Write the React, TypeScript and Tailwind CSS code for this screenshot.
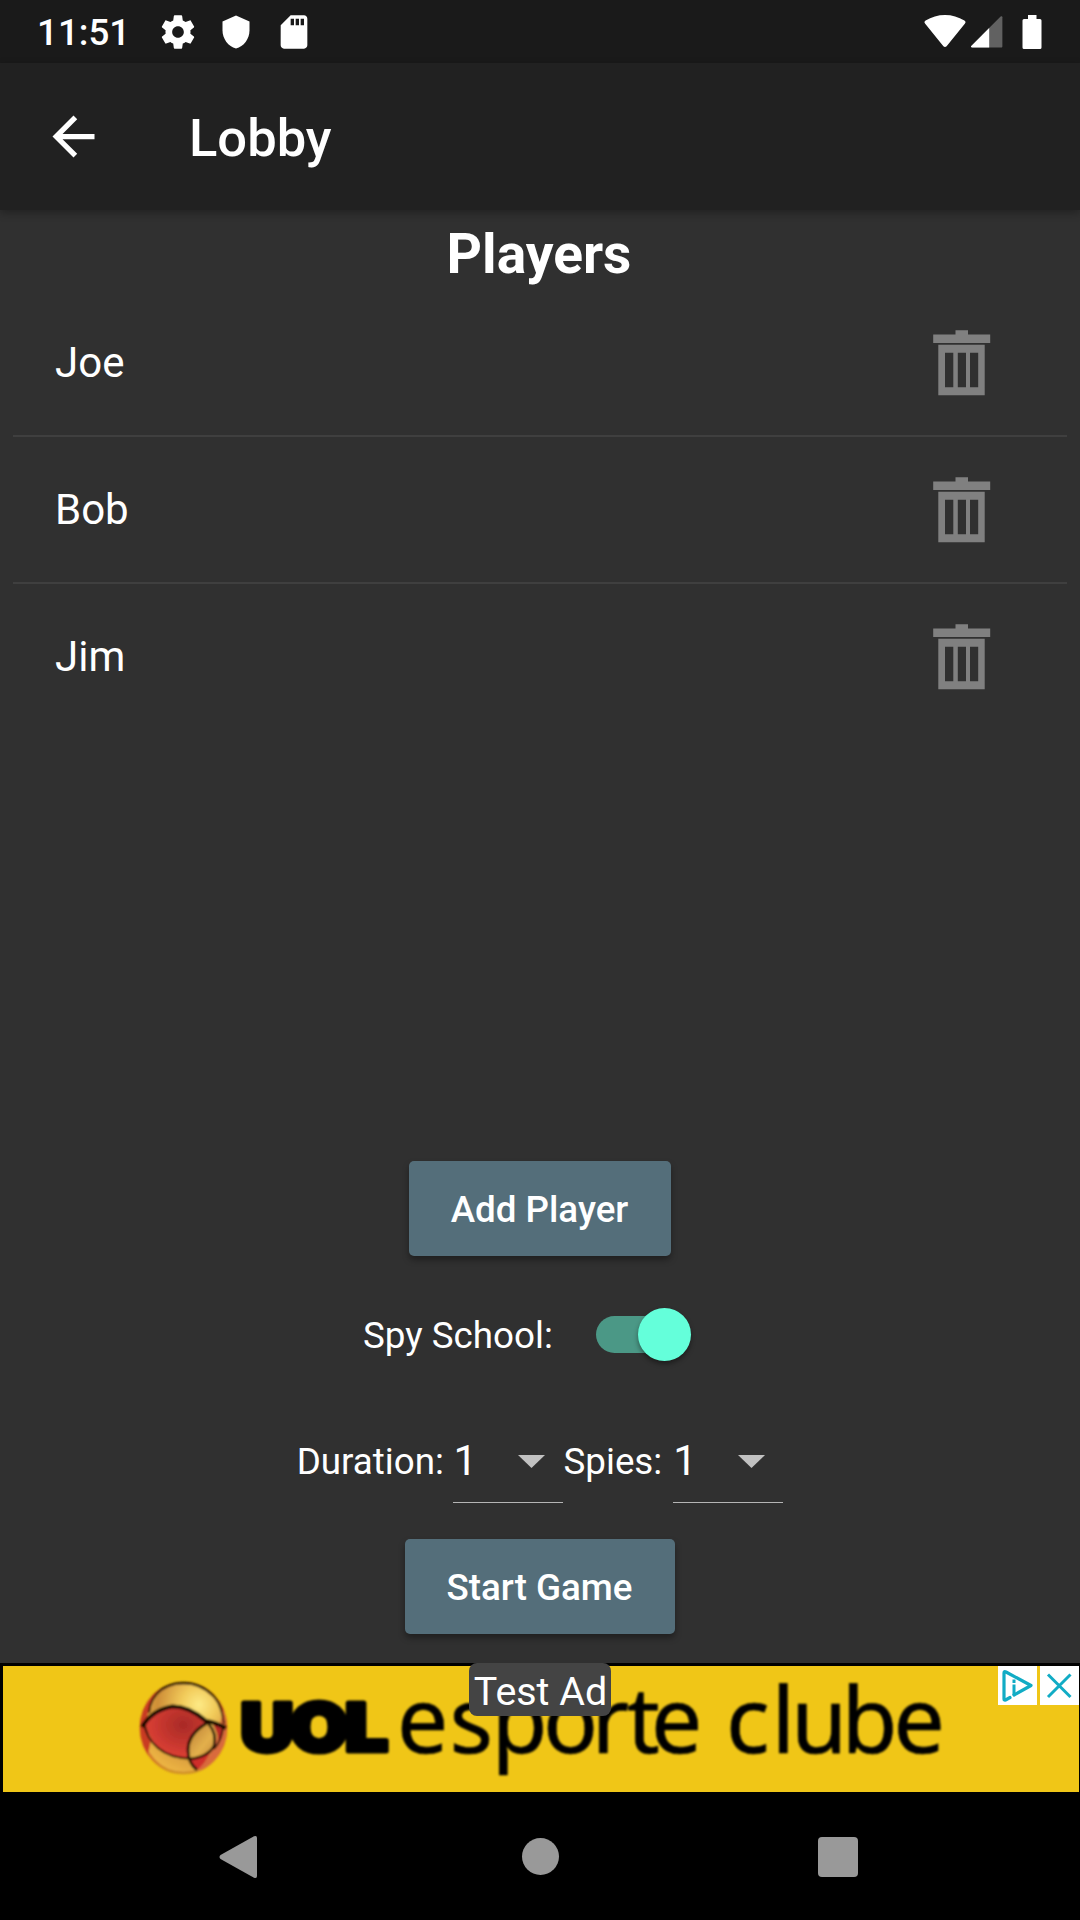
import React from "react";

const players = ["Joe", "Bob", "Jim"];

function StatusBar() {
  return (
    <div className="flex h-[63px] shrink-0 items-center justify-between bg-[#1a1a1a] pl-[37px] pr-[38px]">
      <div className="flex items-center">
        <span className="w-[121px] pt-[2px] text-[36.75px] leading-[60px] font-medium">11:51</span>
        <svg className="h-[40px] w-[40px]" viewBox="0 0 24 24" fill="white">
          <path d="M19.43 12.98c.04-.32.07-.64.07-.98s-.03-.66-.07-.98l2.11-1.65c.19-.15.24-.42.12-.64l-2-3.46c-.12-.22-.39-.3-.61-.22l-2.49 1c-.52-.4-1.08-.73-1.69-.98l-.38-2.65C14.46 2.18 14.25 2 14 2h-4c-.25 0-.46.18-.49.42l-.38 2.65c-.61.25-1.17.59-1.69.98l-2.49-1c-.23-.09-.49 0-.61.22l-2 3.46c-.13.22-.07.49.12.64l2.11 1.65c-.04.32-.07.65-.07.98s.03.66.07.98l-2.11 1.65c-.19.15-.24.42-.12.64l2 3.46c.12.22.39.3.61.22l2.49-1c.52.4 1.08.73 1.69.98l.38 2.65c.03.24.24.42.49.42h4c.25 0 .46-.18.49-.42l.38-2.65c.61-.25 1.17-.59 1.69-.98l2.49 1c.23.09.49 0 .61-.22l2-3.46c.12-.22.07-.49-.12-.64l-2.11-1.65zM12 15.5c-1.93 0-3.5-1.57-3.5-3.5s1.57-3.5 3.5-3.5 3.5 1.57 3.5 3.5-1.57 3.5-3.5 3.5z" />
        </svg>
        <svg className="ml-[20px] h-[36px] w-[36px]" viewBox="0 0 24 24" fill="white">
          <path d="M12 1L3 5v6c0 5.55 3.84 10.74 9 12 5.16-1.26 9-6.45 9-12V5l-9-4z" />
        </svg>
        <svg className="ml-[20px] h-[40px] w-[40px]" viewBox="0 0 24 24" fill="white">
          <path d="M18 2h-8L4.02 8 4 20c0 1.1.9 2 2 2h12c1.1 0 2-.9 2-2V4c0-1.100-.9-2-2-2zm-6 6h-2V4h2v4zm3 0h-2V4h2v4zm3 0h-2V4h2v4z" />
        </svg>
      </div>
      <div className="flex items-center">
        <svg className="h-[34px] w-[42px]" viewBox="0 0 42 34" fill="white">
          <path d="M1.200 8.800C0 7.500.3 6.500 1.600 5.600 7.500 1.900 14 0 21 0s13.500 1.900 19.400 5.600c1.300.9 1.600 1.900.4 3.200L22.600 31.200c-1 1.100-2.200 1.100-3.200 0z" />
        </svg>
        <svg className="ml-[5px] h-[32px] w-[32px]" viewBox="0 0 32 32">
          <path d="M0 30.200L29.600.6c.9-.8 1.800-.5 1.800.7V30c0 1-.4 1.500-1.400 1.500H1.300C0 31.500-.3 30.800 0 30.200z" fill="#616161" />
          <path d="M0 30.200L18.200 12v19.500H1.300C0 31.500-.3 30.800 0 30.200z" fill="white" />
        </svg>
        <svg className="ml-[19px] h-[34px] w-[20px]" viewBox="0 0 20 34" fill="white">
          <path d="M6 0h8.500v4H18q1.500 0 1.500 1.500v27Q19.500 34 18 34H2Q.5 34 .5 32.500v-27Q.5 4 2 4h4z" />
        </svg>
      </div>
    </div>
  );
}

function TrashIcon() {
  return (
    <svg className="h-[66px] w-[58px]" viewBox="0 0 58 66" fill="#808080">
      <path d="M22.500.200h12.500v4.300h22.200v8.500H.2V4.500h22.300z" />
      <path
        fillRule="evenodd"
        d="M5.300 14.700h46.400v50.600H5.300zM12 22.800v34.500h8.300V22.800zM24.800 22.800v34.500h8.200V22.800zM37 22.800v34.500h8.200V22.800z"
      />
    </svg>
  );
}

function Button({ children, className }: { children: React.ReactNode; className: string }) {
  return (
    <button
      className={
        "h-[95px] rounded-[5px] bg-[#546e7a] pt-[2px] pr-px text-[36.75px] font-medium whitespace-nowrap shadow-[0_4px_6px_rgba(0,0,0,0.35)] " +
        className
      }
    >
      {children}
    </button>
  );
}

function Dropdown({ value }: { value: string }) {
  return (
    <div className="flex h-[84px] w-[110px] items-center justify-between border-b border-[#b5b5b5] pr-[18px]">
      <span className="text-[42px] leading-[60px]">{value}</span>
      <svg className="mt-[2px] h-[13px] w-[27px]" viewBox="0 0 27 13" fill="#c1c1c1">
        <path d="M0 0h27L13.500 13z" />
      </svg>
    </div>
  );
}

function AdBanner() {
  return (
    <div className="relative h-[130px] shrink-0 bg-black pt-[3px] pr-px pl-[3px]">
      <div className="flex h-[126px] items-start justify-between bg-[#f0c617]">
        <svg className="h-[126px] w-[960px]" viewBox="3 1666 960 126">
          <defs>
            <radialGradient id="gold" cx="0.68" cy="0.24" r="0.8">
              <stop offset="0" stopColor="#fdea86" />
              <stop offset="0.25" stopColor="#f2cb5a" />
              <stop offset="0.6" stopColor="#cf8f38" />
              <stop offset="1" stopColor="#edb544" />
            </radialGradient>
            <radialGradient id="red" cx="0.62" cy="0.35" r="0.6">
              <stop offset="0" stopColor="#a82a27" />
              <stop offset="1" stopColor="#d93e33" />
            </radialGradient>
            <linearGradient id="rim" x1="0" y1="0" x2="0" y2="1">
              <stop offset="0" stopColor="#5c3510" />
              <stop offset="0.35" stopColor="#c23a22" />
              <stop offset="0.65" stopColor="#d4502a" />
              <stop offset="1" stopColor="#cf9025" />
            </linearGradient>
            <linearGradient id="lens" x1="0" y1="0" x2="1" y2="1">
              <stop offset="0" stopColor="#b97c34" />
              <stop offset="0.6" stopColor="#e3b04c" />
              <stop offset="1" stopColor="#c98a38" />
            </linearGradient>
            <clipPath id="globe">
              <ellipse cx="183.500" cy="1728" rx="43.500" ry="46" />
            </clipPath>
            <filter id="soft">
              <feGaussianBlur stdDeviation="0.9" />
            </filter>
          </defs>
          <g filter="url(#soft)">
            <ellipse cx="183.500" cy="1728" rx="42.500" ry="45" fill="url(#gold)" stroke="url(#rim)" strokeWidth="2.500" />
            <g clipPath="url(#globe)">
              <path d="M160 1686Q139 1702 140 1730Q140 1742 148 1755L151 1740Q144 1722 149 1710Q152 1698 162 1688z" fill="#c93a24" />
              <path d="M224 1706Q229 1728 225 1744Q218 1762 203 1771L197 1769Q215 1755 219 1728z" fill="#d96b3c" />
              <path d="M146 1722Q156 1708 176 1707Q192 1708 206 1722Q189 1732 189 1758Q168 1759 154 1743Q147 1733 146 1722z" fill="url(#red)" />
              <path d="M206 1724Q188 1735 189 1757Q206 1756 214 1744Q218 1733 208 1724z" fill="url(#lens)" />
              <path d="M190 1759Q203 1757 211 1751Q205 1764 197 1770z" fill="#cf2f2a" />
              <path d="M212 1723L223 1727Q223 1737 219 1743Q218 1733 212 1723z" fill="#b92a26" />
              <g fill="none" stroke="#140703">
                <path d="M149 1713Q150 1698 162 1689Q172 1683 184 1683Q204 1684 216 1699Q222 1708 224 1724" strokeWidth="1.800" />
                <path d="M142 1727Q152 1710 172 1706.500Q189 1706 206 1721Q214 1722 226 1728" strokeWidth="4.200" />
                <path d="M144 1722Q146 1738 158 1748Q170 1758 190 1758.500" strokeWidth="2" />
                <path d="M207 1723Q188 1734 188 1750Q188 1763 197 1770" strokeWidth="2.800" />
                <path d="M208 1723Q217 1733 214 1746Q208 1757 190 1759" strokeWidth="2.600" />
                <path d="M223 1727Q222 1740 214 1749" strokeWidth="1.800" />
              </g>
            </g>
            <g
              fontFamily="Inter"
              fontWeight="900"
              fontSize="66"
              stroke="black"
              strokeWidth="5"
              strokeLinejoin="round"
            >
              <text x="240.500" y="1750.500" textLength="53" lengthAdjust="spacingAndGlyphs">U</text>
              <text x="290" y="1750.500" textLength="58" lengthAdjust="spacingAndGlyphs">O</text>
              <text x="345" y="1750.500" textLength="43" lengthAdjust="spacingAndGlyphs">L</text>
            </g>
            <g fontFamily="Noto Sans" fontSize="91" stroke="black" strokeWidth="0.600">
              <text x="397 449.500 491.500 543 591.500 627 651" y="1753">esporte</text>
              <text x="726 771.500 791 841.500 893.500" y="1753">clube</text>
            </g>
          </g>
        </svg>
        <div className="flex gap-[3px]">
          <svg className="h-[39px] w-[39px] bg-white" viewBox="0 0 39 39" fill="none" stroke="#11acc5">
            <path d="M12 31.500L7.500 34Q6 34.500 6 33V7Q6 5 8 6L33 19.500L16 29" strokeWidth="3.200" strokeLinejoin="round" strokeLinecap="round" />
            <path d="M16 18.500V29M16 13.500V17" strokeWidth="3" />
          </svg>
          <svg className="h-[39px] w-[39px] bg-white" viewBox="0 0 39 39" fill="none" stroke="#11acc5">
            <path d="M8 8.500L30.500 31M30.500 8.500L8 31" strokeWidth="3" />
          </svg>
        </div>
      </div>
      <div className="absolute top-0 left-[469px] flex h-[53px] w-[142px] items-center justify-center rounded-[8px] bg-[#444] pt-[5px] pl-px text-[39.4px] leading-none whitespace-nowrap">
        Test Ad
      </div>
    </div>
  );
}

export default function App() {
  return (
    <div className="flex h-[1920px] w-[1080px] flex-col overflow-hidden bg-[#303030] font-['Roboto',sans-serif] text-white">
      <StatusBar />
      <header className="z-10 flex h-[147px] shrink-0 items-center bg-[#212121] pl-[42px] shadow-[0_3px_8px_rgba(0,0,0,0.3)]">
        <svg className="h-[63px] w-[63px]" viewBox="0 0 24 24" fill="white">
          <path d="M20 11H7.830l5.590-5.590L12 4l-8 8 8 8 1.410-1.410L7.830 13H20v-2z" />
        </svg>
        <h1 className="ml-[84px] pt-[2px] text-[52.5px] leading-[62px] font-medium">Lobby</h1>
      </header>

      <main className="flex grow flex-col items-center">
        <h2 className="h-[80px] pt-[12px] pr-[2px] text-[55.125px] leading-[65px] font-bold">Players</h2>
        <ul className="w-[1054px]">
          {players.map((name, i) => (
            <li
              key={name}
              className={
                "flex items-center justify-between pr-[76px] pl-[42px] " +
                (i < players.length - 1 ? "h-[147px] border-b-2 border-[#3f3f3f]" : "h-[145px]")
              }
            >
              <span className="text-[42px] leading-[50px]">{name}</span>
              <TrashIcon />
            </li>
          ))}
        </ul>

        <div className="mt-auto flex flex-col items-center pb-[29px]">
          <Button className="w-[262px]">Add Player</Button>
          <div className="mt-[26px] flex h-[105px] w-[356px] items-center">
            <span className="pt-[2px] pl-px text-[36.75px] whitespace-nowrap">Spy School:</span>
            <div className="relative ml-[43px] h-[37px] w-[87px] shrink-0 rounded-full bg-[#4b9886]">
              <div className="absolute top-[-8px] left-[42px] h-[53px] w-[53px] rounded-full bg-[#64ffda] shadow-[0_3px_5px_rgba(0,0,0,0.4)]" />
            </div>
          </div>
          <div className="mt-[32px] flex h-[84px] items-center text-[36.75px] whitespace-pre">
            <span className="pt-[2px] pr-[0.5px]">Duration: </span>
            <Dropdown value="1" />
            <span className="pt-[2px] pr-[2px]">Spies: </span>
            <Dropdown value="1" />
          </div>
          <Button className="mt-[36px] w-[270px]">Start Game</Button>
        </div>
      </main>

      <AdBanner />

      <nav className="flex h-[127px] shrink-0 items-center justify-between bg-black pr-[222px] pl-[219px]">
        <svg className="h-[44px] w-[39px]" viewBox="0 0 39 44" fill="#999">
          <path d="M1.500 20L35 1.300Q38 0 38 3V41Q38 44 35 42.700L1.500 24Q-.5 22 1.500 20z" />
        </svg>
        <div className="ml-[4px] h-[37px] w-[37px] rounded-full bg-[#999]" />
        <div className="h-[40px] w-[40px] rounded-[4px] bg-[#999]" />
      </nav>
    </div>
  );
}
